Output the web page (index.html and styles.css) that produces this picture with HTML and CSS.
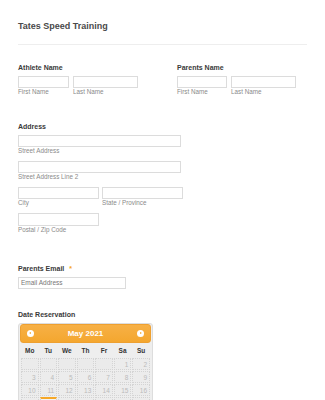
FILE: index.html
```html
<!DOCTYPE html>
<html lang="en">
<head>
    <meta charset="UTF-8">
    <meta name="viewport" content="width=device-width, initial-scale=1.0">
    <title>Tates Speed Training</title>
    <link rel="stylesheet" href="styles.css">
</head>
<body>

    <div class="form">
        <div class="form-header">
            <h1>Tates Speed Training</h1>
        </div>

        <div class="name-row">
            <div class="field">
                <div class="label">Athlete Name</div>
                <div class="inputs">
                    <div class="sub"><div class="input w-first"></div><span>First Name</span></div>
                    <div class="sub"><div class="input w-last"></div><span>Last Name</span></div>
                </div>
            </div>
            <div class="field parents">
                <div class="label">Parents Name</div>
                <div class="inputs">
                    <div class="sub"><div class="input w-first2"></div><span>First Name</span></div>
                    <div class="sub"><div class="input w-last"></div><span>Last Name</span></div>
                </div>
            </div>
        </div>

        <div class="field address">
            <div class="label">Address</div>
            <div class="sub line"><div class="input w-street"></div><span>Street Address</span></div>
            <div class="sub line"><div class="input w-street"></div><span>Street Address Line 2</span></div>
            <div class="inputs city-row">
                <div class="sub"><div class="input w-city"></div><span>City</span></div>
                <div class="sub"><div class="input w-city"></div><span>State / Province</span></div>
            </div>
            <div class="sub line"><div class="input w-city tall"></div><span>Postal / Zip Code</span></div>
        </div>

        <div class="field email">
            <div class="label">Parents Email <span class="req">*</span></div>
            <div class="input w-email">Email Address</div>
        </div>

        <div class="field date">
            <div class="label">Date Reservation</div>
            <div class="calendar">
                <div class="cal-head">
                    <span class="nav prev"></span>
                    <span class="month">May 2021</span>
                    <span class="nav next"></span>
                </div>
                <table>
                    <tr class="days">
                        <th>Mo</th><th>Tu</th><th>We</th><th>Th</th><th>Fr</th><th>Sa</th><th>Su</th>
                    </tr>
                    <tr>
                        <td class="empty"></td><td class="empty"></td><td class="empty"></td><td class="empty"></td><td class="empty"></td><td>1</td><td>2</td>
                    </tr>
                    <tr>
                        <td>3</td><td>4</td><td>5</td><td>6</td><td>7</td><td>8</td><td>9</td>
                    </tr>
                    <tr>
                        <td>10</td><td>11</td><td>12</td><td>13</td><td>14</td><td>15</td><td>16</td>
                    </tr>
                    <tr>
                        <td>17</td><td class="today">18</td><td>19</td><td>20</td><td>21</td><td>22</td><td>23</td>
                    </tr>
                </table>
            </div>
        </div>
    </div>

</body>
</html>
```
FILE: styles.css
```css
body {
    font-family: "Liberation Sans", Arial, sans-serif;
    background-color: #ffffff;
    color: #333333;
    margin: 0;
    padding: 0;
}
.form {
    padding: 0 18px;
}
.form-header {
    padding: 19px 0 11px;
    border-bottom: 1px solid #eeeeee;
}
h1 {
    margin: 0;
    font-size: 9px;
    line-height: 14px;
    font-weight: bold;
    color: #4a4a4a;
}
.label {
    font-size: 7px;
    line-height: 10px;
    font-weight: bold;
    color: #3a3a3a;
    margin-bottom: 3px;
}
.req {
    color: #f5a623;
    margin-left: 3px;
}
.name-row {
    display: flex;
    margin-top: 18px;
}
.parents {
    margin-left: 39px;
}
.inputs {
    display: flex;
    gap: 4px;
}
.city-row {
    gap: 3px;
    margin-bottom: 6px;
}
.sub {
    display: flex;
    flex-direction: column;
}
.sub span {
    font-size: 6.3px;
    line-height: 8px;
    color: #8a8a8a;
}
.line {
    margin-bottom: 6px;
}
.input {
    box-sizing: border-box;
    height: 12px;
    border: 1px solid #dcdcdc;
    background: #ffffff;
}
.tall {
    height: 13px;
}
.w-first { width: 51px; }
.w-first2 { width: 50px; }
.w-last { width: 65px; }
.w-street { width: 163px; }
.w-city { width: 81px; }
.w-email {
    width: 108px;
    font-size: 6.5px;
    line-height: 10px;
    color: #777777;
    padding-left: 2px;
}
.address {
    margin-top: 26px;
}
.email {
    margin-top: 30px;
}
.date {
    margin-top: 21px;
}
.calendar {
    box-sizing: border-box;
    width: 135px;
    border: 1px solid #dddddd;
    border-radius: 3px;
    background: #eeeeee;
    padding: 0 1px 1px;
}
.cal-head {
    display: flex;
    align-items: center;
    justify-content: space-between;
    height: 19px;
    padding: 0 6px;
    background: linear-gradient(#f7b046, #f4a72f);
    border: 1px solid #eea030;
    border-radius: 3px;
    box-sizing: border-box;
}
.month {
    color: #ffffff;
    font-size: 8px;
    font-weight: bold;
}
.nav {
    width: 7px;
    height: 7px;
    border-radius: 50%;
    background: #ffffff;
    position: relative;
}
.nav::after {
    content: "";
    position: absolute;
    top: 2px;
    border-top: 1.5px solid transparent;
    border-bottom: 1.5px solid transparent;
}
.prev::after {
    left: 2px;
    border-right: 2px solid #f4a72f;
}
.next::after {
    left: 3px;
    border-left: 2px solid #f4a72f;
}
table {
    width: 100%;
    border-spacing: 1px;
    table-layout: fixed;
}
.days th {
    height: 13px;
    font-size: 6.5px;
    font-weight: bold;
    color: #333333;
    text-align: center;
    padding: 0;
}
td {
    height: 10px;
    padding: 0 2px 0 0;
    border: 1px dotted #d4d4d4;
    background: #ececec;
    font-size: 6.5px;
    color: #bbbbbb;
    text-align: right;
}
td.empty {
    background: #ebebeb;
}
td.today {
    border-top: 2px solid #f6a828;
    background: #f3f3f3;
}
```
